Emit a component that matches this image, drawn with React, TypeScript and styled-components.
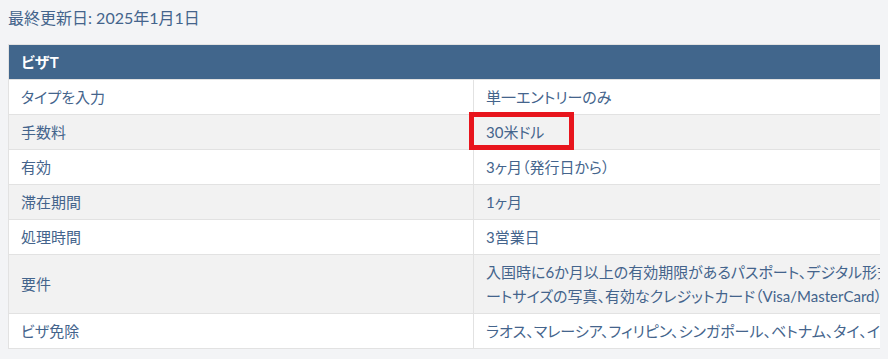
import React from "react";
import styled, { createGlobalStyle } from "styled-components";

const Global = createGlobalStyle`
  html, body { overflow: hidden; }
  body {
    margin: 8px;
    background: #f3f4f6;
    font-family: Lato, "Noto Sans CJK JP", sans-serif;
    font-feature-settings: "palt";
    color: #44648c;
  }
`;

const Updated = styled.p`
  margin: 0 0 16px;
  font-size: 16px;
  line-height: 20px;
  color: #44648c;
  white-space: nowrap;
`;

const Table = styled.table`
  width: 960px;
  border-collapse: collapse;
  table-layout: fixed;
  background: #fff;
  font-size: 15px;
`;

const LabelCol = styled.col`
  width: 465px;
`;

const HeadCell = styled.th`
  background: #41668c;
  color: #fff;
  text-align: left;
  font-weight: 700;
  padding: 5px 12px;
  line-height: 24px;
  border: 1px solid #e2e2e2;
`;

const Row = styled.tr<{ $alt: boolean }>`
  background: ${(p) => (p.$alt ? "#f2f2f2" : "#ffffff")};
`;

const Cell = styled.td`
  padding: 5px 12px;
  line-height: 24px;
  border: 1px solid #e2e2e2;
  vertical-align: middle;
  color: #44648c;
`;

const Highlight = styled.span`
  position: relative;
  display: inline-block;
  line-height: 24px;
  &::after {
    content: "";
    position: absolute;
    left: -17px;
    width: 105px;
    top: -8px;
    bottom: -6px;
    box-sizing: border-box;
    border: 5px solid #e8151d;
    pointer-events: none;
  }
`;

const rows: { label: string; value: string; highlight?: boolean }[] = [
  { label: "タイプを入力", value: "単一エントリーのみ" },
  { label: "手数料", value: "30米ドル", highlight: true },
  { label: "有効", value: "3ヶ月（発行日から）" },
  { label: "滞在期間", value: "1ヶ月" },
  { label: "処理時間", value: "3営業日" },
  {
    label: "要件",
    value:
      "入国時に6か月以上の有効期限があるパスポート、デジタル形式のパスポートサイズの写真、有効なクレジットカード（Visa/MasterCard）",
  },
  {
    label: "ビザ免除",
    value: "ラオス、マレーシア、フィリピン、シンガポール、ベトナム、タイ、インドネシア",
  },
];

export default function App() {
  return (
    <>
      <Global />
      <Updated>最終更新日: 2025年1月1日</Updated>
      <Table>
        <colgroup>
          <LabelCol />
          <col />
        </colgroup>
        <thead>
          <tr>
            <HeadCell colSpan={2}>ビザT</HeadCell>
          </tr>
        </thead>
        <tbody>
          {rows.map((r, i) => (
            <Row key={r.label} $alt={i % 2 === 1}>
              <Cell>{r.label}</Cell>
              <Cell>
                {r.highlight ? <Highlight>{r.value}</Highlight> : r.value}
              </Cell>
            </Row>
          ))}
        </tbody>
      </Table>
    </>
  );
}
